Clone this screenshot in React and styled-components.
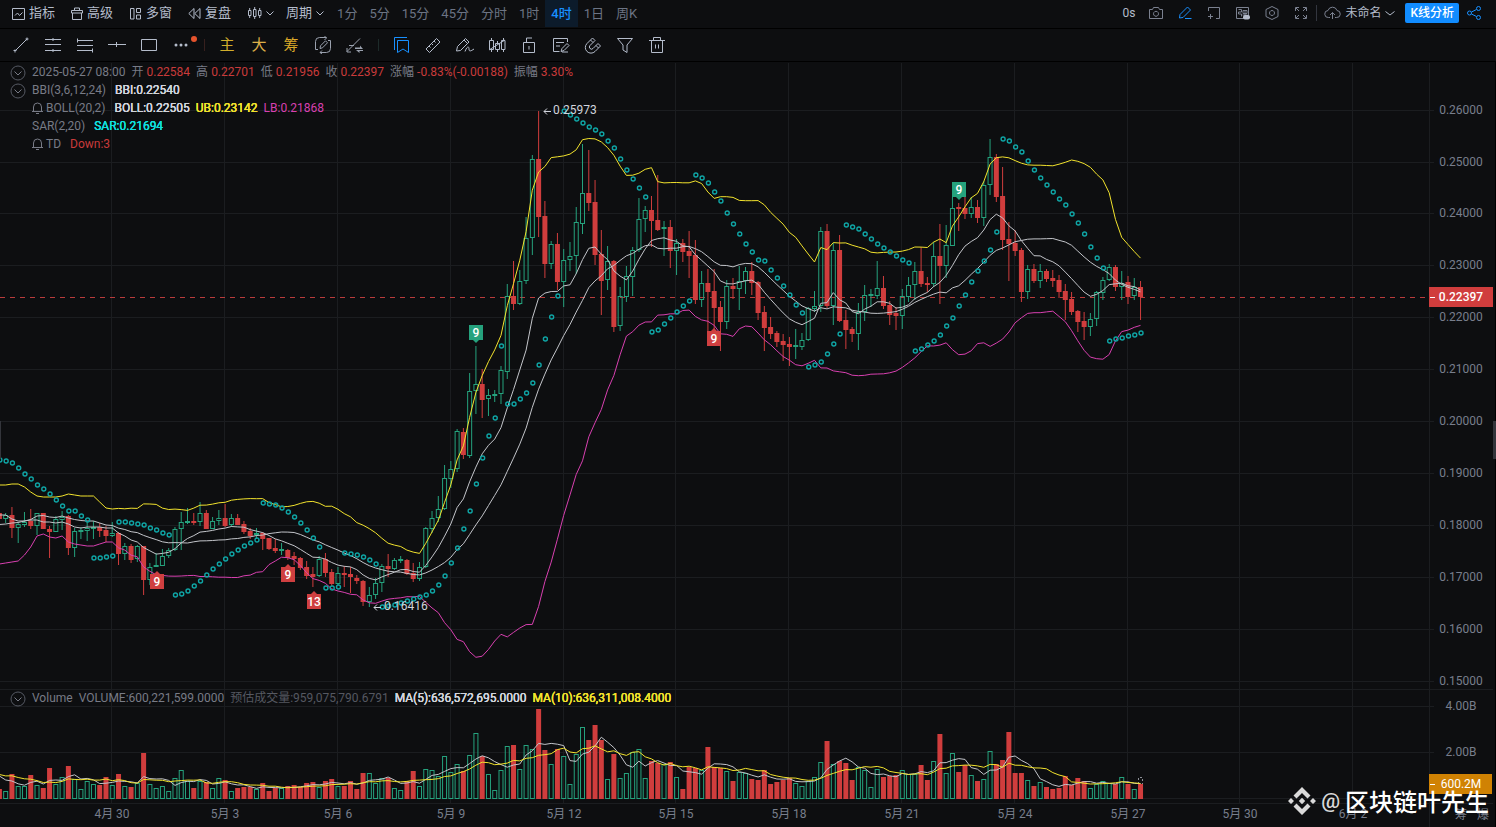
import React, { useState } from 'react';
import styled, { createGlobalStyle } from 'styled-components';

const GlobalStyle = createGlobalStyle`
  * {
    box-sizing: border-box;
  }
  body {
    margin: 0;
    background: #0d0e10;
    color: #b4bccb;
    font-family: Roboto, 'Noto Sans CJK SC', sans-serif;
    font-size: 12px;
    overflow: hidden;
  }
  button {
    font-family: inherit;
    border: 0;
    margin: 0;
    background: none;
    color: inherit;
    cursor: pointer;
  }
`;

const Page = styled.div`
  height: 100vh;
  display: flex;
  flex-direction: column;
`;

const TopBar = styled.header`
  flex: none;
  height: 29px;
  display: flex;
  align-items: center;
  justify-content: space-between;
  padding: 0 14px 2px 12px;
  border-bottom: 1px solid #000;
`;

const Group = styled.div`
  display: flex;
  align-items: center;
  gap: ${(p) => p.$gap || 0}px;
`;

const MenuButton = styled.button`
  display: flex;
  align-items: center;
  gap: 4px;
  padding: 0;
  font-size: ${(p) => (p.$small ? 12 : 13)}px;
  line-height: 20px;
  white-space: nowrap;
`;

const Intervals = styled.nav`
  display: flex;
  height: 28px;
  margin-left: 7px;
`;

const Interval = styled.button`
  padding: 0 6px;
  font-size: 13px;
  line-height: 27px;
  color: ${(p) => (p.$active ? '#1890ff' : '#6c7484')};
  background: ${(p) => (p.$active ? '#0c1b2b' : 'none')};
  font-weight: ${(p) => (p.$active ? 500 : 400)};
  white-space: nowrap;
`;

const IconButton = styled.button`
  display: flex;
  padding: 0;
  color: ${(p) => p.$color || '#7b8190'};
`;

const Divider = styled.span`
  width: 1px;
  height: 16px;
  background: #33363f;
`;

const PrimaryButton = styled.button`
  height: 20px;
  padding: 0 5px;
  border-radius: 2px;
  background: #118cff;
  color: #fff;
  font-size: 12px;
  font-weight: 500;
  line-height: 20px;
  white-space: nowrap;
`;

const ToolBar = styled.div`
  flex: none;
  height: 33px;
  display: flex;
  align-items: center;
  padding-left: 5px;
  border-bottom: 1px solid #000;
`;

const Tool = styled.button`
  position: relative;
  width: 32px;
  height: 32px;
  padding: 0;
  display: flex;
  align-items: center;
  justify-content: center;
  font-size: 15px;
  line-height: 30px;
  color: ${(p) => p.$color || '#b4bccb'};
`;

const RedDot = styled.i`
  position: absolute;
  top: 7px;
  right: 0;
  width: 6px;
  height: 6px;
  border-radius: 50%;
  background: #e5532d;
`;

const ToolDivider = styled.span`
  width: 1px;
  height: 12px;
  margin: 0 6px 0 7px;
  background: ${(p) => p.$color};
`;

const ChartArea = styled.main`
  position: relative;
  flex: 1;
  min-height: 0;
`;

const ChartSvg = styled.svg`
  display: block;
  width: 100%;
  height: 100%;
`;

const Legend = styled.div`
  position: absolute;
  left: 10px;
  top: ${(p) => p.$top}px;
`;

const LegendRow = styled.div`
  display: flex;
  align-items: center;
  gap: 6px;
  height: 18px;
  line-height: 18px;
  white-space: nowrap;
`;

const Toggle = styled.button`
  display: flex;
  width: 16px;
  padding: 2px 0 0;
`;

const Spacer = styled.span`
  width: 16px;
`;

const Label = styled.span`
  display: flex;
  align-items: center;
  gap: 3px;
  color: #787b86;
  margin-right: ${(p) => (p.$wide ? 3 : 0)}px;
`;

const Value = styled.span`
  color: ${(p) => p.$color};
  text-shadow: ${(p) => (p.$strong ? '0 0 currentColor, 0 0 currentColor' : 'none')};
`;

const Watermark = styled.div`
  position: absolute;
  right: 7px;
  bottom: 8px;
  display: flex;
  align-items: center;
  gap: 5px;
  color: #fff;
  font-family: 'Noto Sans CJK SC', sans-serif;
  font-size: 24px;
  font-weight: 500;
  line-height: 36px;
`;

const At = styled.span`
  color: #d9d9d9;
  font-family: Roboto, sans-serif;
  font-size: 21px;
`;

const EdgeHandle = styled.span`
  position: absolute;
  top: 359px;
  ${(p) => p.$side}: 0;
  width: ${(p) => (p.$side === 'left' ? 1 : 3)}px;
  height: 38px;
  background: #33353b;
`;

// top, body top, body bottom, bottom of each candle; last item is 1 for a rising one
const candles = [
  [513, 513, 519, 520, 0], [513, 515, 519, 523, 1], [507, 515, 528, 538, 0], [522, 524, 528, 543, 1],
  [512, 522, 525, 527, 1], [509, 521, 526, 529, 0], [513, 513, 526, 535, 1], [513, 513, 529, 529, 0],
  [526, 529, 532, 558, 0], [516, 519, 532, 532, 1], [511, 517, 520, 530, 1], [515, 516, 548, 555, 0],
  [528, 531, 548, 557, 1], [527, 530, 531, 539, 1], [522, 528, 531, 541, 1], [521, 527, 528, 539, 1],
  [523, 527, 531, 537, 0], [526, 530, 536, 542, 0], [522, 533, 536, 537, 1], [532, 533, 554, 565, 0],
  [543, 546, 554, 560, 1], [544, 546, 560, 563, 0], [545, 546, 559, 562, 1], [546, 546, 580, 595, 0],
  [563, 567, 580, 585, 1], [553, 565, 566, 567, 1], [549, 556, 566, 566, 1], [548, 550, 556, 558, 1],
  [527, 529, 550, 551, 1], [512, 522, 529, 550, 1], [508, 521, 523, 524, 1], [513, 521, 523, 525, 0],
  [502, 513, 522, 526, 1], [510, 513, 529, 529, 0], [517, 521, 529, 529, 1], [510, 518, 521, 525, 1],
  [504, 518, 526, 527, 0], [514, 518, 525, 527, 1], [514, 518, 525, 525, 0], [521, 524, 532, 534, 0],
  [528, 531, 536, 539, 0], [528, 533, 535, 539, 1], [532, 533, 539, 550, 0], [538, 538, 549, 550, 0],
  [539, 548, 551, 553, 0], [543, 549, 551, 555, 1], [549, 550, 558, 560, 0], [552, 556, 559, 565, 0],
  [557, 558, 568, 570, 0], [561, 567, 576, 579, 0], [567, 574, 577, 587, 0], [556, 559, 576, 577, 1],
  [553, 559, 573, 577, 0], [569, 572, 584, 586, 0], [567, 573, 584, 585, 1], [566, 573, 575, 587, 0],
  [567, 574, 577, 593, 0], [575, 578, 581, 584, 0], [580, 581, 602, 606, 0], [587, 595, 602, 607, 1],
  [578, 583, 595, 599, 1], [564, 566, 583, 592, 1], [554, 566, 569, 577, 0], [558, 560, 569, 570, 1],
  [556, 559, 561, 563, 1], [559, 560, 574, 575, 0], [563, 573, 579, 582, 0], [562, 567, 579, 581, 1],
  [527, 528, 567, 568, 1], [511, 518, 529, 533, 1], [496, 509, 518, 522, 1], [465, 478, 509, 510, 1],
  [461, 469, 479, 488, 1], [429, 431, 469, 472, 1], [428, 432, 455, 459, 0], [373, 391, 456, 458, 1],
  [346, 384, 391, 414, 1], [369, 384, 400, 418, 0], [389, 395, 399, 416, 1], [390, 394, 396, 402, 1],
  [366, 370, 394, 404, 1], [284, 296, 372, 379, 1], [261, 296, 304, 310, 0], [270, 281, 304, 305, 1],
  [217, 238, 281, 284, 1], [155, 159, 238, 255, 1], [111, 159, 217, 237, 0], [201, 216, 264, 278, 0],
  [241, 244, 264, 269, 1], [233, 244, 282, 290, 0], [249, 260, 282, 307, 1], [242, 256, 260, 271, 1],
  [207, 222, 256, 274, 1], [144, 193, 224, 234, 1], [150, 193, 203, 211, 0], [180, 202, 255, 265, 0],
  [230, 254, 281, 315, 0], [246, 261, 280, 290, 1], [260, 261, 327, 332, 0], [287, 296, 326, 331, 1],
  [266, 276, 297, 302, 1], [247, 250, 277, 296, 1], [198, 219, 250, 252, 1], [206, 210, 219, 232, 1],
  [196, 210, 221, 247, 0], [175, 220, 230, 231, 0], [221, 227, 229, 256, 1], [220, 227, 251, 268, 0],
  [239, 243, 251, 275, 1], [239, 243, 252, 262, 0], [231, 251, 256, 278, 0], [240, 255, 300, 304, 0],
  [271, 283, 300, 307, 1], [269, 283, 292, 332, 0], [269, 291, 308, 330, 0], [301, 307, 322, 351, 0],
  [280, 286, 322, 329, 1], [278, 286, 289, 299, 0], [266, 281, 289, 310, 1], [267, 271, 281, 294, 1],
  [262, 271, 283, 295, 0], [281, 282, 313, 320, 0], [306, 312, 328, 351, 0], [317, 327, 334, 339, 0],
  [331, 333, 342, 347, 0], [334, 341, 345, 361, 0], [337, 344, 347, 366, 0], [329, 345, 347, 359, 1],
  [333, 340, 347, 350, 1], [307, 308, 340, 341, 1], [291, 306, 309, 312, 1], [227, 231, 306, 312, 1],
  [224, 231, 306, 308, 0], [243, 250, 306, 325, 1], [235, 250, 321, 322, 0], [310, 320, 330, 349, 0],
  [327, 329, 334, 342, 0], [303, 312, 334, 350, 1], [285, 295, 312, 321, 1], [289, 294, 296, 307, 1],
  [261, 288, 296, 299, 1], [276, 288, 306, 309, 0], [301, 305, 315, 325, 0], [307, 313, 316, 330, 0],
  [289, 296, 316, 329, 1], [277, 285, 297, 302, 1], [262, 271, 285, 300, 1], [247, 271, 284, 287, 0],
  [277, 283, 285, 292, 0], [242, 256, 284, 287, 1], [224, 256, 266, 304, 0], [225, 245, 266, 278, 1],
  [197, 208, 246, 246, 1], [203, 207, 209, 231, 0], [197, 208, 214, 219, 0], [197, 207, 214, 218, 1],
  [200, 207, 218, 223, 0], [181, 185, 218, 226, 1], [139, 157, 185, 195, 1], [154, 157, 197, 202, 0],
  [167, 196, 240, 250, 0], [222, 239, 244, 281, 0], [230, 243, 251, 256, 0], [248, 250, 292, 302, 0],
  [265, 269, 292, 299, 1], [264, 269, 281, 283, 0], [264, 271, 281, 288, 1], [269, 271, 279, 282, 0],
  [270, 278, 281, 287, 0], [275, 280, 292, 298, 0], [284, 291, 300, 320, 0], [292, 299, 312, 315, 0],
  [310, 311, 322, 332, 0], [312, 321, 327, 340, 0], [313, 319, 327, 336, 1], [291, 292, 319, 326, 1],
  [277, 280, 293, 300, 1], [264, 267, 280, 281, 1], [265, 267, 287, 291, 0], [271, 283, 287, 300, 1],
  [276, 282, 297, 304, 0], [278, 287, 296, 300, 1], [281, 287, 297, 320, 0],
];

const volumes = [
  10, 8, 25, 13, 13, 24, 14, 11, 31, 15, 22, 33, 20, 10, 18, 15, 14, 22, 14, 25, 13, 12, 16, 46, 15, 11, 13, 8, 21,
  29, 18, 11, 18, 17, 11, 21, 19, 8, 11, 12, 12, 10, 16, 8, 11, 11, 13, 14, 12, 16, 17, 12, 18, 20, 13, 13, 18, 10,
  26, 26, 16, 21, 21, 11, 9, 18, 28, 13, 30, 29, 23, 43, 27, 35, 28, 44, 66, 43, 25, 9, 29, 53, 54, 30, 54, 50, 90,
  49, 35, 50, 43, 15, 45, 72, 59, 74, 59, 20, 45, 21, 26, 47, 50, 21, 38, 36, 35, 37, 22, 10, 32, 31, 29, 52, 32,
  31, 28, 18, 27, 26, 20, 19, 29, 15, 17, 19, 21, 16, 13, 18, 22, 37, 58, 35, 38, 36, 19, 32, 29, 12, 30, 22, 23,
  24, 29, 25, 25, 34, 19, 38, 65, 26, 46, 27, 34, 24, 18, 20, 48, 35, 39, 67, 26, 26, 19, 13, 17, 12, 10, 11, 23,
  14, 21, 18, 11, 15, 18, 16, 15, 22, 15, 10, 15,
];

const sar = [
  460, 461, 463, 468, 474, 479, 485, 489, 494, 500, 506, 511, 511, 516, 520, 558, 558, 557, 556, 522, 522, 523, 524,
  525, 528, 530, 533, 535, 595, 594, 591, 586, 581, 575, 569, 564, 559, 554, 550, 546, 543, 540, 503, 504, 505, 508,
  512, 517, 523, 530, 538, 547, 588, 588, 587, 553, 554, 555, 557, 560, 564, 607, 606, 605, 603, 601, 599, 597, 595,
  591, 585, 576, 563, 548, 529, 511, 484, 458, 436, 418, 346, 404, 404, 399, 393, 383, 365, 339, 317, 296, 111, 115,
  119, 123, 127, 130, 134, 141, 148, 159, 170, 179, 188, 197, 332, 330, 324, 318, 312, 306, 301, 175, 178, 183, 192,
  201, 213, 224, 234, 244, 252, 260, 261, 270, 278, 286, 295, 305, 313, 367, 365, 362, 354, 344, 334, 225, 227, 229,
  234, 239, 244, 248, 252, 256, 260, 263, 351, 349, 345, 341, 335, 326, 318, 306, 295, 282, 271, 261, 250, 232, 139,
  141, 147, 152, 161, 170, 178, 185, 192, 199, 205, 214, 223, 234, 247, 258, 268, 341, 339, 338, 336, 335, 333,
];

// values before the averages have enough candles of their own
const upperSeed = [485, 485, 484, 484, 487, 492, 496, 497, 497, 497, 496, 494, 495, 496, 496, 496, 502, 508, 509];
const lowerSeed = [564, 563, 562, 561, 555, 547, 536, 534, 537, 538, 536, 542, 544, 545, 546, 546, 544, 542, 542];
const bbiSeed = [
  515, 515, 519, 521, 521, 520, 520, 522, 522, 523, 522, 524, 527, 528, 527, 527, 527, 528, 528, 533, 536, 540, 542,
];
const volumeSeed = [22, 24, 30, 26, 28, 28, 30, 27, 20];

const STEP = 6.27;
const BASE = 799;
const GREEN = '#25a27d';
const RED = '#d03d3d';

const xAt = (i) => i * STEP - 0.6;
const priceY = (k) => Math.floor(110.1 + k * 51.9);
const dateX = (k) => Math.floor(111.95 + k * 112.8);

const closes = candles.map((c) => (c[4] ? c[1] : c[2]));
const mean = (list) => list.reduce((a, b) => a + b, 0) / list.length;
const lastN = (list, i, n) => list.slice(i - n + 1, i + 1);

const boll = (i) => {
  if (i < upperSeed.length) {
    return { up: upperSeed[i], low: lowerSeed[i], mid: (upperSeed[i] + lowerSeed[i]) / 2 };
  }
  const part = lastN(closes, i, 20);
  const mid = mean(part);
  const dev = Math.sqrt(mean(part.map((v) => (v - mid) ** 2)));
  return { up: mid - 2 * dev, low: mid + 2 * dev, mid };
};

const bbi = (i) =>
  i < bbiSeed.length ? bbiSeed[i] : mean([3, 6, 12, 24].map((n) => mean(lastN(closes, i, n))));

const volumeMa = (i, n) => BASE - mean(lastN([...volumeSeed, ...volumes], i + volumeSeed.length, n));

const toPoints = (fn) => candles.map((c, i) => `${xAt(i).toFixed(1)},${fn(i).toFixed(1)}`).join(' ');

const lines = [
  { color: '#c3c5ca', points: toPoints(bbi) },
  { color: '#c3c5ca', points: toPoints((i) => boll(i).mid) },
  { color: '#f2e32d', points: toPoints((i) => boll(i).up) },
  { color: '#d840b0', points: toPoints((i) => boll(i).low) },
  { color: '#c3c5ca', points: toPoints((i) => volumeMa(i, 5)) },
  { color: '#f2e32d', points: toPoints((i) => volumeMa(i, 10)) },
];

const prices = [26, 25, 24, 23, 22, 21, 20, 19, 18, 17, 16, 15];
const dates = [
  '4月 30', '5月 3', '5月 6', '5月 9', '5月 12', '5月 15', '5月 18', '5月 21', '5月 24', '5月 27', '5月 30', '6月 2',
];

const marks = [
  { x: 157, y: 574, text: '9' },
  { x: 288, y: 567, text: '9' },
  { x: 314, y: 594, text: '13' },
  { x: 714, y: 331, text: '9' },
  { x: 476, y: 325, text: '9', up: true },
  { x: 959, y: 182, text: '9', up: true },
];

const Mark = ({ x, y, text, up }) => (
  <g fill={up ? GREEN : '#cf3f40'}>
    <rect x={x - 7} y={y} width="14" height="15" />
    <path d={up ? `M${x - 3} ${y + 15}h6l-3 3z` : `M${x - 3} ${y}h6l-3 -3z`} />
    <text x={x} y={y + 12} fill="#fff" fontWeight="500" textAnchor="middle">
      {text}
    </text>
  </g>
);

const Chart = () => (
  <ChartSvg viewBox="0 62 1496 765" preserveAspectRatio="xMinYMin meet" fontSize="12">
    <g stroke="#1b1d20" fill="none" shapeRendering="crispEdges">
      {prices.map((p, k) => (
        <path key={p} d={`M0 ${priceY(k) + 0.5}H1434`} />
      ))}
      {dates.map((d, k) => (
        <path key={d} d={`M${dateX(k) + 0.5} 63V803`} />
      ))}
      <path d="M1429.5 63V827M0 689.5H1493M0 706.5H1434M0 752.5H1434M0 798.5H1434M0 803.5H1493" />
    </g>

    <path d="M0 297.5H1429" stroke="#b93c3c" strokeDasharray="5 5" />

    {candles.map(([high, top, bottom, low, rising], i) => {
      const x = xAt(i);
      const volume = volumes[i];
      return rising ? (
        <g key={i} stroke={GREEN} fill="none">
          <path d={`M${x} ${high}V${top}M${x} ${bottom}V${low}`} />
          <rect x={x - 2} y={top + 0.5} width="4" height={Math.max(bottom - top - 1, 1)} />
          <rect x={x - 2} y={BASE - volume + 0.5} width="4" height={volume - 1} />
        </g>
      ) : (
        <g key={i} fill={RED}>
          <rect x={x - 0.5} y={high} width="1" height={low - high} />
          <rect x={x - 2.5} y={top} width="5" height={bottom - top} />
          <rect x={x - 2.5} y={BASE - volume} width="5" height={volume} />
        </g>
      );
    })}
    <path d="M1138.5 784V777.5H1142.5V784" stroke="#8c8f96" strokeDasharray="2 2" fill="none" />

    {lines.map((line, k) => (
      <polyline key={k} points={line.points} fill="none" stroke={line.color} strokeLinejoin="round" />
    ))}
    <g fill="none" stroke="#0fa5a5" strokeWidth="1.4">
      {sar.map((y, i) => (
        <circle key={i} cx={xAt(i) + 0.5} cy={y} r="2" />
      ))}
    </g>

    {marks.map((m) => (
      <Mark key={m.x} {...m} />
    ))}

    <g fill="#d1d4dc">
      <path d="M551 111.5h-7m3 -3l-3 3l3 3M381 607.5h-7m3 -3l-3 3l3 3" stroke="#d1d4dc" fill="none" />
      <text x="553" y="114">0.25973</text>
      <text x="384" y="610">0.16416</text>
    </g>

    <g fill="#787e8c" textAnchor="middle">
      {prices.map((p, k) => (
        <text key={p} x="1461" y={priceY(k) + 4}>
          {(p / 100).toFixed(5)}
        </text>
      ))}
      <text x="1461" y="710">4.00B</text>
      <text x="1461" y="756">2.00B</text>
      {dates.map((d, k) => (
        <text key={d} x={dateX(k) + 1} y="818">
          {d}
        </text>
      ))}
      <text x="1461" y="819">筹</text>
      <text x="1483" y="819">爆</text>
    </g>

    <rect x="1429" y="287" width="64" height="20" fill="#d03d3d" />
    <rect x="1429" y="774" width="63" height="20" fill="#d08203" />
    <path d="M1430 297.5h5M1430 784.5h5" stroke="#fff" />
    <g fill="#fff" textAnchor="middle">
      <text x="1461" y="301" fontWeight="500">0.22397</text>
      <text x="1461" y="788">600.2M</text>
    </g>
    <rect x="1495" y="62" width="1" height="765" fill="#000" />
  </ChartSvg>
);

const Icon = ({ children, w = 16, h = 16, ...rest }) => (
  <svg width={w} height={h} viewBox={`0 0 ${w} ${h}`} fill="none" stroke="currentColor" aria-hidden="true" {...rest}>
    {children}
  </svg>
);

const Chevron = ({ w = 8 }) => (
  <Icon w={w} h={8}>
    <path d={`M.5 2.5l${w / 2 - 0.5} 3.5l${w / 2 - 0.5} -3.5`} />
  </Icon>
);

const FoldIcon = () => (
  <Icon>
    <circle cx="8" cy="8" r="7" stroke="#555963" />
    <path d="M4.5 6.5L8 10l3.5 -3.5" stroke="#787b86" />
  </Icon>
);

const BellIcon = () => (
  <Icon w={11} h={14}>
    <path d="M0 10.5h11M1.5 10.5V6a4 4 0 0 1 8 0v4.5M4 12.5h3" />
  </Icon>
);

const menus = [
  {
    text: '指标',
    icon: (
      <Icon w={13} h={13}>
        <path d="M.5 1.5h12v11h-12z M3 8.5l2.5 -2.5l2 2.5l3 -3" />
      </Icon>
    ),
  },
  {
    text: '高级',
    icon: (
      <Icon w={12} h={13}>
        <path d="M.5 3.5h11v2.5h-11z M1.5 6v6.5h9V6M3.5 3.5v-2.5h5v2.5" />
      </Icon>
    ),
  },
  {
    text: '多窗',
    icon: (
      <Icon w={13} h={13}>
        <path d="M1.5 1.5h3.5v10.5h-3.5zM7.5 1.5h4v4h-4zM7.5 8h4v4h-4z" />
      </Icon>
    ),
  },
  {
    text: '复盘',
    icon: (
      <Icon w={13} h={13}>
        <path d="M6 1.5v10L.8 6.5zM12 1.5v10L6.800 6.5z" />
      </Icon>
    ),
  },
];

const intervals = ['1分', '5分', '15分', '45分', '分时', '1时', '4时', '1日', '周K'];

const drawTools = [
  { name: '线段', icon: <path d="M3 15L15 3M1.5 14.5h3M3 13.5v3M13.5 3h3M15 1.5v3" /> },
  { name: '平行线', icon: <path d="M1 3.5h16M1 8.5h16M1 14.5h16M9 2v3M9 13v3" /> },
  { name: '价格线', icon: <path d="M1 4.5h16M1 9.5h16M1 14.5h16M1.5 2.5v4M16.5 12.5v4" /> },
  { name: '水平线', icon: <path d="M0 8.5h18M8.5 6v5" /> },
  { name: '矩形', icon: <path d="M1.5 3.5h15v11h-15z" /> },
  {
    name: '更多',
    dot: true,
    icon: (
      <g fill="currentColor" stroke="none">
        <circle cx="4" cy="9" r="1.5" />
        <circle cx="9" cy="9" r="1.5" />
        <circle cx="14" cy="9" r="1.5" />
      </g>
    ),
  },
];

const chipTools = [
  { name: '主', color: '#d2ae2c' },
  { name: '大', color: '#dcae48' },
  { name: '筹', color: '#dba828' },
];

const extraTools = [
  {
    name: '连续绘图',
    color: '#9aa1ae',
    icon: (
      <path d="M4 13.5H1.5v-8a4 4 0 0 1 4 -4H12.500M10.5 0l2 2l-2 2M14 4.5h2.500v8a4 4 0 0 1 -4 4H6M8 14.500l-2 2l2 1.500M6 12.500l.5 -2.700l5 -5l2 2l-5 5z" />
    ),
  },
  {
    name: '画线设置',
    color: '#9aa1ae',
    icon: (
      <>
        <path d="M1 15.500L14 2.500M1 12v4h4M3 9.500h5" />
        <path d="M9 11.500h5v-2l3 3.500h-8zM17 14h-7l3.500 3v-2h3.500z" fill="currentColor" stroke="none" />
      </>
    ),
  },
];

const chartTools = [
  { name: '收藏', color: '#1890ff', icon: <path d="M2.5 14V1.5H15M5.5 4.5h11v12l-5.5 -3.5l-5.5 3.5z" /> },
  {
    name: '测量',
    icon: <path d="M2 13L12.5 2.5l3.5 3.5L5.5 16.5zM5 10l1.5 1.5M7.5 7.5l1.5 1.5M10 5l1.5 1.5" />,
  },
  {
    name: '画笔',
    icon: <path d="M.5 15l1 -4.500l8 -8l3.500 3.500l-8.500 8.500zM8 4l3.500 3.500M9 15.500c2 -5.500 4 -5.500 4 -2.500s2 2 5 0" />,
  },
  {
    name: '形态',
    icon: <path d="M1.5 4.5h4v9h-4zM7.5 7.5h4v6h-4zM13.5 4.5h3.500v9h-3.500zM3.5 2v2.5M3.5 13.5V16M9.5 5v2.5M9.5 13.5V16M15.500 2v2.5M15.500 13.5V16M1 14L17 4" />,
  },
  { name: '锁定', icon: <path d="M3.5 6.5h11v10h-11zM6.5 6.5v-4.500h5.500M9 10v3.5" /> },
  {
    name: '备注',
    icon: <path d="M15.5 6V2.5h-14v13h6M4 6.5h8M4 10h4M9 15.5l1 -3l5 -5l2 2l-5 5zM10 16h6" />,
  },
  {
    name: '磁铁',
    icon: <path d="M8.5 2L3 7.5a5.5 5.5 0 0 0 8 8L16.5 10l-2.5 -2.5L9 12.5a2 2 0 0 1 -3 -3l5 -5zM6.5 4l2.5 2.5M12 9.5l2.5 2.5" />,
  },
  { name: '筛选', icon: <path d="M1.5 2.5h15l-5.5 6.5v7.5l-4 -2.5V9z" /> },
  { name: '删除', icon: <path d="M1 4.5h16M5.5 4.5v-3h7v3M3.5 4.5v12h11v-12M7.5 8.5v4M10.5 8.5v4" /> },
];

const ToolList = ({ items }) =>
  items.map((t) => (
    <Tool key={t.name} $color={t.color} aria-label={t.name}>
      {t.icon ? <Icon w={18} h={18}>{t.icon}</Icon> : t.name}
      {t.dot && <RedDot />}
    </Tool>
  ));

const topIcons = [
  {
    name: '截图',
    icon: <path d="M1.5 4.5h3l1 -2h5l1 2h3v9h-13zM8 6.3a2.5 2.5 0 1 0 .01 0" />,
  },
  { name: '画线', color: '#1890ff', icon: <path d="M2.5 13l.5 -3.5l7.5 -7.5l3 3l-7.5 7.5zM8 13.5h6.5" /> },
  { name: '新增', icon: <path d="M2.5 6V2.5h11v11H10M2 11.5h5M4.5 9v5" /> },
  {
    name: '弹幕',
    icon: (
      <>
        <path d="M1.5 2.5h12v11h-12zM3.5 4.5h3v2.5h-3v2h3v2.5M8 5.5h4v3h-4zM10 5v7M7.5 10h5" />
        <rect x="8" y="10" width="7" height="4.5" rx="2" fill="#b4bccb" stroke="none" />
      </>
    ),
  },
  { name: '设置', icon: <path d="M8 1.5l6 3v7l-6 3l-6 -3v-7zM8 5.5a2.5 2.5 0 1 0 .01 0" /> },
  {
    name: '全屏',
    icon: <path d="M2.5 6V2.5H6M10 2.5h3.5V6M13.5 10v3.5H10M6 13.5H2.5V10M3 3l3 3M13 3l-3 3M13 13l-3 -3M3 13l3 -3" />,
  },
];

const BinanceLogo = () => (
  <Icon w={28} h={28} fill="#dadada" stroke="none">
    <path d="M14 0l8.5 8.5l-3 3L14 6l-5.5 5.5l-3 -3zM14 28l8.5 -8.5l-3 -3L14 22l-5.5 -5.5l-3 3zM14 10.800l3.200 3.200l-3.200 3.200l-3.200 -3.200zM3 11l3 3l-3 3l-3 -3zM25 11l3 3l-3 3l-3 -3z" />
  </Icon>
);

const quotes = [
  ['开', '0.22584'],
  ['高', '0.22701'],
  ['低', '0.21956'],
  ['收', '0.22397'],
  ['涨幅', '-0.83%(-0.00188)'],
  ['振幅', '3.30%'],
];

const App = () => {
  const [interval, setActive] = useState('4时');

  return (
    <Page>
      <GlobalStyle />
      <TopBar>
        <Group>
          <Group $gap={16}>
            {menus.map((m) => (
              <MenuButton key={m.text}>
                {m.icon}
                {m.text}
              </MenuButton>
            ))}
            <Group $gap={12}>
              <MenuButton aria-label="图表类型">
                <Icon w={15} h={14}>
                  <path d="M1.5 4.5h2.5v5h-2.5zM6.5 3.5h2.5v7h-2.5zM11.5 4.5h2.5v5h-2.5zM2.7 2v2.5M2.7 9.5V12M7.7 1v2.5M7.7 10.5V13M12.7 2v2.5M12.7 9.5V12" />
                </Icon>
                <Chevron />
              </MenuButton>
              <MenuButton>
                周期
                <Chevron />
              </MenuButton>
            </Group>
          </Group>
          <Intervals>
            {intervals.map((name) => (
              <Interval key={name} $active={name === interval} onClick={() => setActive(name)}>
                {name}
              </Interval>
            ))}
          </Intervals>
        </Group>
        <Group $gap={7}>
          <Group $gap={13}>
            <span>0s</span>
            {topIcons.map((t) => (
              <IconButton key={t.name} $color={t.color} aria-label={t.name}>
                <Icon>{t.icon}</Icon>
              </IconButton>
            ))}
          </Group>
          <Divider />
          <Group $gap={10}>
            <MenuButton $small>
              <Icon w={17} h={16}>
                <path
                  d="M6 12.5H4.5a3.5 3.5 0 0 1 -.5 -7a4.7 4.7 0 0 1 9 0a3.5 3.5 0 0 1 -.5 7H11M8.5 14V7.5M6 10l2.5 -2.5l2.5 2.5"
                  stroke="#7b8190"
                />
              </Icon>
              未命名
              <Chevron w={10} />
            </MenuButton>
            <PrimaryButton>K线分析</PrimaryButton>
          </Group>
          <IconButton $color="#1890ff" aria-label="分享">
            <Icon>
              <circle cx="3.5" cy="8" r="2" />
              <circle cx="12.5" cy="3.5" r="2" />
              <circle cx="12.5" cy="12.5" r="2" />
              <path d="M5.5 7L10.5 4.5M5.5 9l5 2.5" />
            </Icon>
          </IconButton>
        </Group>
      </TopBar>

      <ToolBar>
        <ToolList items={drawTools} />
        <ToolDivider $color="#37201e" />
        <ToolList items={chipTools} />
        <ToolList items={extraTools} />
        <ToolDivider $color="#1d2b2a" />
        <ToolList items={chartTools} />
      </ToolBar>

      <ChartArea>
        <Chart />
        <Legend $top={1}>
          <LegendRow>
            <Toggle aria-label="折叠行情"><FoldIcon /></Toggle>
            <Label>2025-05-27 08:00</Label>
            {quotes.map(([name, value]) => (
              <Label key={name}>
                {name}
                <Value $color="#c93b3b">{value}</Value>
              </Label>
            ))}
          </LegendRow>
          <LegendRow>
            <Toggle aria-label="折叠指标"><FoldIcon /></Toggle>
            <Label $wide>BBI(3,6,12,24)</Label>
            <Value $color="#d1d4dc" $strong>BBI:0.22540</Value>
          </LegendRow>
          <LegendRow>
            <Spacer />
            <Label $wide><BellIcon />BOLL(20,2)</Label>
            <Value $color="#d1d4dc" $strong>BOLL:0.22505</Value>
            <Value $color="#f2e32d" $strong>UB:0.23142</Value>
            <Value $color="#d840b0">LB:0.21868</Value>
          </LegendRow>
          <LegendRow>
            <Spacer />
            <Label $wide>SAR(2,20)</Label>
            <Value $color="#0fdede" $strong>SAR:0.21694</Value>
          </LegendRow>
          <LegendRow>
            <Spacer />
            <Label $wide><BellIcon />TD</Label>
            <Value $color="#c93b3b">Down:3</Value>
          </LegendRow>
        </Legend>
        <Legend $top={627}>
          <LegendRow>
            <Toggle aria-label="折叠成交量"><FoldIcon /></Toggle>
            <Label>Volume</Label>
            <Value $color="#787b86">VOLUME:600,221,599.0000</Value>
            <Value $color="#555861">预估成交量:959,075,790.6791</Value>
            <Value $color="#d1d4dc" $strong>MA(5):636,572,695.0000</Value>
            <Value $color="#f2e32d" $strong>MA(10):636,311,008.4000</Value>
          </LegendRow>
        </Legend>
        <EdgeHandle $side="left" />
        <EdgeHandle $side="right" />
        <Watermark>
          <BinanceLogo />
          <At>@</At>
          区块链叶先生
        </Watermark>
      </ChartArea>
    </Page>
  );
};

export default App;
